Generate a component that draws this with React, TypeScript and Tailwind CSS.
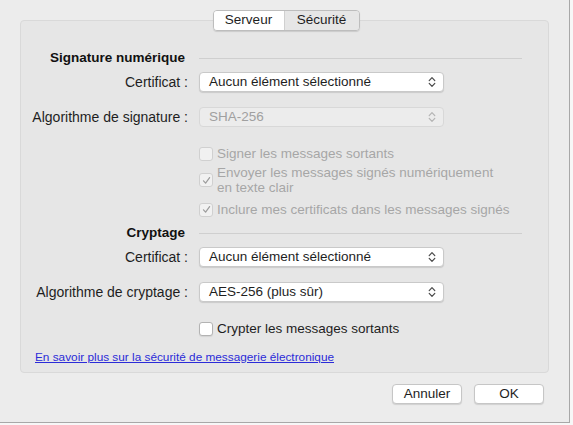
import React from "react";

const font = { fontFamily: '"Liberation Sans", Arial, sans-serif' };

function Chevrons({ disabled }: { disabled?: boolean }) {
  const c = disabled ? "#b4b4b4" : "#4a4a4a";
  return (
    <svg width="8" height="12" viewBox="0 0 8 12" fill="none">
      <path d="M1.2 4.6 L4 1.6 L6.8 4.6" stroke={c} strokeWidth="1.2" strokeLinecap="round" strokeLinejoin="round" />
      <path d="M1.2 7.4 L4 10.4 L6.8 7.4" stroke={c} strokeWidth="1.2" strokeLinecap="round" strokeLinejoin="round" />
    </svg>
  );
}

function Select({ value, disabled }: { value: string; disabled?: boolean }) {
  return (
    <div
      className={
        "flex h-[20px] w-[245px] items-center justify-between rounded-[4px] pl-[9px] pr-[7px] text-[13.5px] " +
        (disabled
          ? "border border-[#d8d8d8] bg-[#ececec] text-[#a0a0a0]"
          : "border border-[#c9c9c9] bg-white text-[#1e1e1e] shadow-[0_1px_1px_rgba(0,0,0,0.12)]")
      }
    >
      <span className="leading-none">{value}</span>
      <Chevrons disabled={disabled} />
    </div>
  );
}

function Box({ checked, disabled }: { checked?: boolean; disabled?: boolean }) {
  return (
    <div
      className={
        "flex h-[14px] w-[14px] shrink-0 items-center justify-center rounded-[3px] border " +
        (disabled ? "border-[#d0d0d0] bg-[#f1f1f1]" : "border-[#b3b3b3] bg-white shadow-[0_1px_1px_rgba(0,0,0,0.08)]")
      }
    >
      {checked && (
        <svg width="9" height="9" viewBox="0 0 9 9" fill="none">
          <path d="M1.5 4.8 L3.6 7.2 L7.6 1.6" stroke={disabled ? "#9c9c9c" : "#333"} strokeWidth="1.2" strokeLinecap="round" strokeLinejoin="round" />
        </svg>
      )}
    </div>
  );
}

function FieldRow({ label, children, className = "" }: { label: string; children: React.ReactNode; className?: string }) {
  return (
    <div className={"flex items-center " + className}>
      <div className="w-[178px] pr-[11px] text-right text-[14px] leading-[20px] text-[#1e1e1e]">{label}</div>
      {children}
    </div>
  );
}

function Heading({ title, className = "" }: { title: string; className?: string }) {
  return (
    <div className={"flex h-[16px] items-center " + className}>
      <div className="w-[178px] pr-[14px] text-right text-[13.5px] font-bold text-[#111]">{title}</div>
      <div className="mr-[26px] h-px flex-1 bg-[#cfcfcf]" />
    </div>
  );
}

function CheckRow({
  checked,
  disabled,
  children,
  className = "",
}: {
  checked?: boolean;
  disabled?: boolean;
  children: React.ReactNode;
  className?: string;
}) {
  return (
    <div className={"flex items-center pl-[178px] " + className}>
      <Box checked={checked} disabled={disabled} />
      <div className={"ml-[4px] text-[13.5px] leading-[15px] " + (disabled ? "text-[#a6a6a6]" : "text-[#1e1e1e]")}>
        {children}
      </div>
    </div>
  );
}

export default function App() {
  return (
    <div className="h-[425px] w-[573px] overflow-hidden bg-[#f7f7f7]" style={font}>
      <div className="flex h-[423px] w-[570px] flex-col border-b border-r border-[#a8a8a8] bg-[#ececec] px-[20px] pt-[10px]">
        <div className="relative z-10 flex justify-center">
          <div className="ml-[3px] flex h-[21px] overflow-hidden rounded-[4px] border border-[#bdbdbd] text-[13.5px] text-[#1e1e1e] shadow-[0_1px_1px_rgba(0,0,0,0.12)]">
            <div className="flex w-[70px] items-center justify-center bg-white">Serveur</div>
            <div className="flex w-[75px] items-center justify-center border-l border-[#d0d0d0] bg-[#e6e6e6]">Sécurité</div>
          </div>
        </div>
        <div className="-mt-[11px] flex h-[353px] w-[529px] flex-col rounded-[4px] border border-[#d9d9d9] bg-[#e6e6e6]">
          <Heading title="Signature numérique" className="mt-[29px]" />
          <FieldRow label="Certificat :" className="mt-[6px]">
            <Select value="Aucun élément sélectionné" />
          </FieldRow>
          <FieldRow label="Algorithme de signature :" className="mt-[15px]">
            <Select value="SHA-256" disabled />
          </FieldRow>
          <CheckRow disabled className="mt-[19px]">Signer les messages sortants</CheckRow>
          <CheckRow disabled checked className="mt-[4px]">
            Envoyer les messages signés numériquement
            <br />
            en texte clair
          </CheckRow>
          <CheckRow disabled checked className="mt-[7px]">Inclure mes certificats dans les messages signés</CheckRow>
          <Heading title="Cryptage" className="mt-[8px]" />
          <FieldRow label="Certificat :" className="mt-[6px]">
            <Select value="Aucun élément sélectionné" />
          </FieldRow>
          <FieldRow label="Algorithme de cryptage :" className="mt-[15px]">
            <Select value="AES-256 (plus sûr)" />
          </FieldRow>
          <CheckRow className="mt-[19px]">Crypter les messages sortants</CheckRow>
          <div className="mt-[8px] pl-[14px]">
            <span className="text-[11.8px] text-[#2b2bd8] underline">
              En savoir plus sur la sécurité de messagerie électronique
            </span>
          </div>
        </div>
        <div className="mt-[11px] flex w-[529px] justify-end gap-[12px] pr-[5px]">
          <div className="flex h-[20px] w-[70px] items-center justify-center rounded-[4px] border border-[#c6c6c6] bg-white text-[13.5px] text-[#1e1e1e] shadow-[0_1px_1px_rgba(0,0,0,0.12)]">
            Annuler
          </div>
          <div className="flex h-[20px] w-[70px] items-center justify-center rounded-[4px] border border-[#c6c6c6] bg-white text-[13.5px] text-[#1e1e1e] shadow-[0_1px_1px_rgba(0,0,0,0.12)]">
            OK
          </div>
        </div>
      </div>
    </div>
  );
}
